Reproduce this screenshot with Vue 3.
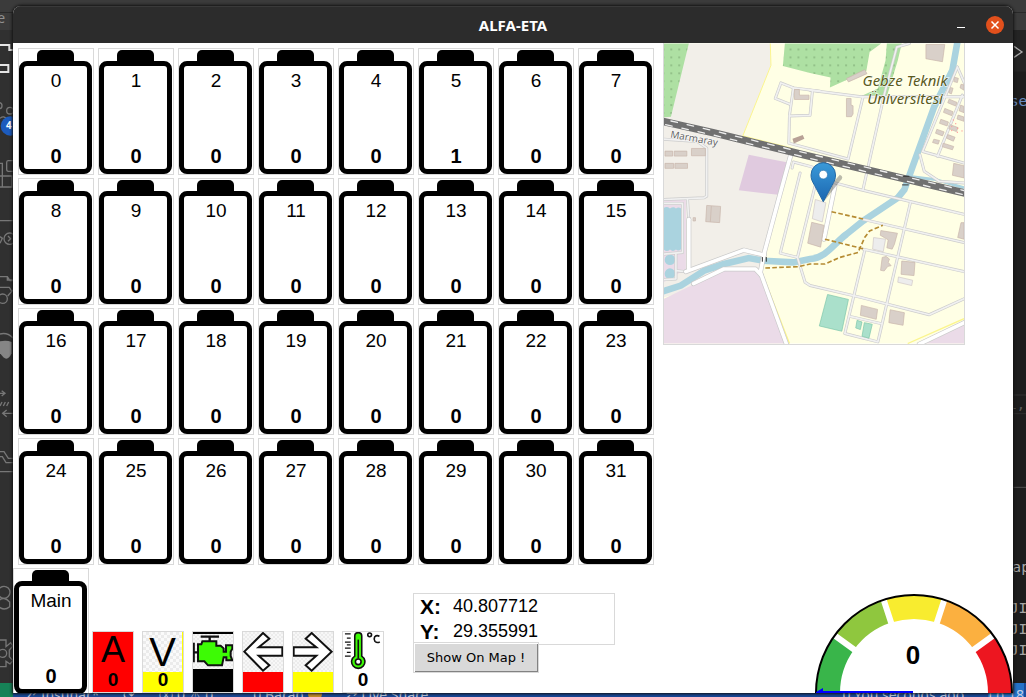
<script setup>
const cells = Array.from({ length: 32 }, (_, i) => ({ name: String(i), value: i === 5 ? 1 : 0 }))

const minorRoads = [
  '480,153 400,143 362,128 345,175 388,192',
  '450,150 605,170 915,170',
  '400,143 388,225 386,310 480,335 565,358 610,170',
  '388,228 450,226 457,155',
  '610,450 675,160 712,20 750,9',
  '525,430 600,450 915,525',
  '396,385 400,367 450,380 480,390',
  '420,400 360,642 412,655 435,730 450,740 600,775 810,828 915,780',
  '465,440 412,655',
  '610,540 915,610',
  '610,630 915,698',
  '753,490 655,910 555,885 615,635',
  '570,833 665,855',
  '895,80 790,335 915,370',
  '895,80 917,130',
  '910,165 835,350',
  '782,345 795,395 840,425 915,430',
  '9,298 110,305 138,325 138,470 130,475 9,480',
  '80,480 84,545',
  '9,492 65,492 65,640 9,645',
  '45,645 45,720 9,722',
  '45,695 75,698'
]
const mainRoads = [
  '84,540 84,690',
  '75,698 250,633 312,648',
  '98,734 190,690 285,690 302,708',
  '392,345 355,480 312,640 300,700 380,920',
  '525,440 492,600',
  '780,917 920,850'
]
const buildings = [
  '403,148 418,148 418,165 447,165 447,178 403,178',
  '12,334 35,334 35,349 12,349',
  '40,334 78,334 78,349 40,349',
  '92,326 134,326 134,348 92,348',
  '12,371 38,371 38,386 12,386',
  '42,371 80,371 80,386 42,386',
  '138,498 180,501 177,550 135,547',
  '800,12 857,12 850,64 800,55',
  '560,115 615,88 622,100 566,125',
  '560,175 574,175 574,195 580,197 580,222 575,230 560,230',
  '886,111 898,114 895,127 884,124',
  '906,132 915,134 915,150 903,143',
  '874,142 882,144 877,161 869,158',
  '870,177 894,187 890,198 866,188',
  '857,205 882,215 878,227 853,217',
  '845,238 868,246 864,258 841,250',
  '833,268 855,276 850,288 829,280',
  '873,254 897,263 892,275 869,266',
  '866,284 888,292 883,304 862,295',
  '852,310 884,320 880,330 850,321',
  '824,298 841,302 837,313 820,308',
  '905,195 915,199 915,218 900,212',
  '897,225 915,231 915,244 894,237',
  '884,371 915,378 915,415 880,407',
  '455,549 492,558 482,624 443,612',
  '664,574 714,582 705,615 698,630 682,626 686,602 662,588',
  '680,652 690,660 686,670 695,680 685,682 674,696 663,694 668,655',
  '727,666 767,670 764,710 725,706',
  '605,800 654,812 650,842 602,830',
  '692,813 735,822 731,860 688,852',
  '906,550 915,550 915,600 896,595'
]
const paleBuildings = [
  '466,480 498,490 487,548 457,538',
  '642,595 678,600 671,638 639,630',
  '717,714 760,724 757,740 715,730'
]
const courts = [
  '503,767 566,782 546,878 478,862',
  '592,845 607,850 602,873 588,868',
  '614,852 638,857 628,899 607,893'
]
const field = '9,9 330,9 332,75 247,288 395,330 300,700 9,775'
const forest = 'M9 9H84L30 230L9 232Z M374 9H665L630 35L620 92L510 142L512 112L450 98L368 77Z M682 9H727L715 60L682 168L600 170L655 145L678 60Z'
const river = 'M5 758L60 740L130 695L190 675L265 657L310 665L400 670L450 660C500 655 520 615 560 585L610 545L715 475L735 450L760 380L825 200L880 90L895 5'
</script>

<template>
  <div class="desktop">
    <svg class="strip left" width="13" height="697" viewBox="0 0 39 2091" aria-hidden="true">
      <rect width="39" height="2091" fill="#303030" />
      <rect width="39" height="90" fill="#3b3b3b" />
      <rect y="36" width="39" height="3" fill="#292929" />
      <text x="-8" y="68" font-size="42" fill="#909090">e</text>
      <g fill="none" stroke="#777" stroke-width="4">
        <path d="M0 135H28V150H39 M0 195H25V216H0" stroke="#e5e5e5" stroke-width="6" />
        <circle cx="-3" cy="317" r="9" /><circle cx="30" cy="332" r="10" /><path d="M0 355Q12 345 20 358" />
        <path d="M0 490H7V560 M0 528H36V561H0 M39 482H24Q20 482 20 488V508Q20 514 25 514H39" />
        <path d="M0 662H39 M0 710L7 715L0 730" /><circle cx="29" cy="716" r="17" /><path d="M24 708L32 716L24 724" />
        <path d="M0 830H22L30 842H39 M22 830V840H39 M0 862H28L34 872H39 M39 870L23 888" /><circle cx="8" cy="896" r="14" />
        <path d="M0 1002Q22 996 39 1014" /><path d="M0 1180H15M5 1172L15 1180L5 1188 M8 1240H39M20 1230L8 1240L20 1250 M0 1218L6 1206M10 1218L16 1206M20 1218L26 1206" />
        <path d="M0 1355H12L25 1375H39 M0 1370H7L18 1388H39 M0 1415H39" />
        <circle cx="12" cy="1777" r="18" /><path d="M-4 1802Q12 1787 29 1806V1820Q12 1834 -4 1820" />
        <path d="M0 1920H18V1940L32 1928L39 1938L28 1950V1970L39 1982L30 1992L18 1984V2000H0" /><circle cx="8" cy="1960" r="12" />
      </g>
      <path d="M0 1024Q20 1020 35 1026V1060Q24 1084 10 1072L0 1060Z" fill="#858585" />
      <circle cx="31" cy="378" r="29" fill="#1c5bbd" />
      <text x="18" y="387" font-size="30" font-weight="700" fill="#fff">4</text>
    </svg>
    <svg class="strip right" width="13" height="697" viewBox="0 0 39 2091" aria-hidden="true">
      <rect width="39" height="2091" fill="#1d1d1d" />
      <rect width="39" height="90" fill="#3b3b3b" />
      <rect y="36" width="39" height="3" fill="#292929" />
      <rect y="90" width="39" height="125" fill="#242424" />
      <path d="M3 139L27 156L3 172" fill="none" stroke="#aaa" stroke-width="4" />
      <path d="M0 1185H39M0 1241H39" stroke="#2b2b2b" stroke-width="4" />
      <path d="M0 1462H39" stroke="#505050" stroke-width="3" />
      <g class="code" font-size="44" fill="#a6a6a6">
        <text x="-10" y="317" fill="#6789bf">se</text>
        <text x="-16" y="1226" fill="#5a5a5a">i,</text>
        <text x="-2" y="1715">ap</text>
        <text x="-10" y="1840">JI</text>
        <text x="-10" y="1902">JI</text>
        <text x="-10" y="1965">JI</text>
      </g>
    </svg>
    <footer class="status">
      <span class="remote"></span>
      <span>⎇ Insuhar*</span><span>⟳</span><span>ⓧ 0 ⚠ 0</span><span class="user">0 Baran <i></i></span><span>⇄ Live Share</span>
      <span class="ago">0 You seconds ago</span><span class="line">Ln 18</span>
    </footer>

    <main class="window">
      <header class="titlebar">
        <h1>ALFA-ETA</h1>
        <div class="controls">
          <button class="minimise" aria-label="Minimise"></button>
          <button class="close" aria-label="Close">
            <svg width="10" height="10" viewBox="0 0 10 10"><path d="M1.5 1.5L8.5 8.5M8.5 1.5L1.5 8.5" stroke="#fff" stroke-width="1.5" /></svg>
          </button>
        </div>
      </header>

      <div class="content">
        <section class="upper">
          <div class="cells">
            <div v-for="cell in cells" :key="cell.name" class="battery">
              <span class="cap"></span>
              <div class="case"><span>{{ cell.name }}</span><b>{{ cell.value }}</b></div>
            </div>
          </div>

          <svg class="map" viewBox="9 9 906 906" role="img" aria-label="Map">
            <defs>
              <pattern id="trees" width="24" height="24" patternUnits="userSpaceOnUse" x="-5" y="15">
                <rect width="24" height="24" fill="#aee0a3" /><circle cx="12" cy="12" r="2" fill="#638c5c" />
              </pattern>
              <linearGradient id="pin" x2="0" y2="1"><stop stop-color="#3a9ad9" /><stop offset="1" stop-color="#1b66b0" /></linearGradient>
            </defs>
            <rect x="9" y="9" width="906" height="906" fill="#ffffe5" />
            <polygon :points="field" fill="#f2efe9" />
            <path d="M330 9L332 75L247 288L395 325" fill="none" stroke="#fbf58e" stroke-width="3" />
            <path :d="forest" fill="url(#trees)" />
            <polygon points="265,345 380,368 354,466 235,452" fill="#e0cadf" />
            <polygon points="9,480 75,480 75,690 9,730" fill="#ebdbe8" />
            <polygon points="9,780 190,692 285,692 305,715 383,915 9,915" fill="#ebdbe8" />
            <polygon points="800,915 915,858 915,915" fill="#ebdbe8" />
            <path d="M308 710L388 915M745 915L915 840" stroke="#fbf58e" stroke-width="4" />
            <g fill="#aad3df">
              <path d="M9 505Q18 500 27 507Q38 500 45 507Q55 500 64 510V625Q55 640 45 631Q36 640 27 631Q18 640 9 632Z" />
              <circle cx="27" cy="662" r="16" /><circle cx="27" cy="704" r="16" />
            </g>
            <path :d="river" fill="none" stroke="#aad3df" stroke-width="20" />
            <path d="M745 410L830 420L915 445" fill="none" stroke="#aad3df" stroke-width="9" />
            <g fill="none" stroke-linejoin="round" stroke-linecap="round">
              <polyline v-for="p in minorRoads" :key="p" :points="p" stroke="#ccc" stroke-width="9" />
              <polyline v-for="p in minorRoads" :key="'i' + p" :points="p" stroke="#f1f1f1" stroke-width="5" />
              <polyline v-for="p in mainRoads" :key="p" :points="p" stroke="#c9c9c9" stroke-width="15" />
              <polyline v-for="p in mainRoads" :key="'i' + p" :points="p" stroke="#fff" stroke-width="11" />
              <path d="M9 245L160 279L450 350L915 460" stroke="#707070" stroke-width="23" />
              <path d="M14 254L160 286L450 356L915 466" stroke="#ededed" stroke-width="4" stroke-dasharray="20 30" />
              <path d="M30 243L160 273L450 343L915 453" stroke="#ededed" stroke-width="4" stroke-dasharray="20 30" />
            </g>
            <path d="M306 654V668M318 654V668M730 410H750M728 436H748" stroke="#333" stroke-width="3" />
            <g fill="none" stroke="#b58b32" stroke-width="5" stroke-dasharray="14 7">
              <path d="M515 517L615 540M495 600L615 630M315 687L415 683L450 675H495L540 655L595 640L615 595L630 575L670 558" />
            </g>
            <g fill="#d9d0c9" stroke="#c8b5aa" stroke-width="2">
              <polygon v-for="p in buildings" :key="p" :points="p" />
              <path d="M152 500L149 547M97 535H104V545H97Z" />
            </g>
            <polygon points="397,297 428,285 433,297 401,311" fill="#b8a196" />
            <g fill="#ededed" stroke="#cfc5c5" stroke-width="2"><polygon v-for="p in paleBuildings" :key="p" :points="p" /></g>
            <g fill="#aae0cb" stroke="#7bc5a9" stroke-width="2"><polygon v-for="p in courts" :key="p" :points="p" /></g>
            <g fill="#f99"><circle cx="883" cy="240" r="2" /><circle cx="890" cy="251" r="2" /><circle cx="878" cy="260" r="2" /><circle cx="896" cy="265" r="2" /><circle cx="895" cy="277" r="2" /><circle cx="878" cy="272" r="2" /><circle cx="909" cy="273" r="2" /></g>
            <text class="rail" transform="translate(27 293) rotate(10)">Marmaray</text>
            <g class="place"><text x="737" y="137">Gebze Teknik</text><text x="737" y="191">Üniversitesi</text></g>
            <path d="M493 485L540 425Q555 412 540 405L510 440Z" fill="#555" opacity=".4" />
            <path d="M490 487L464 438C456 424 453 418 453 406A37 37 0 0 1 527 406C527 418 524 424 516 438Z" fill="url(#pin)" stroke="#2469a5" stroke-width="3" />
            <circle cx="490" cy="405" r="13" fill="#fff" stroke="#2872ae" stroke-width="2" />
          </svg>
        </section>

        <section class="lower">
          <div class="battery">
            <span class="cap"></span>
            <div class="case"><span>Main</span><b>0</b></div>
          </div>

          <div class="indicators">
            <div class="lamp red"><span class="amp">A</span><b>0</b></div>
            <div class="lamp volt"><span class="vol">V</span><b>0</b></div>
            <div class="lamp engine">
              <svg viewBox="9 66 120 120">
                <rect x="9" y="66" width="120" height="6" />
                <rect x="9" y="177" width="120" height="10" />
                <path d="M32 80H87M59 80V94M11 98V157M9 127H22" stroke="#111" stroke-width="7" fill="none" />
                <path d="M37 94H79V107H92L101 115V125H108V106H127V116L122 125V138L127 151H109V142H101L96 166H54L43 154H24V103H34Z" fill="#3dfb05" stroke="#111" stroke-width="6" />
              </svg>
            </div>
            <div class="lamp stop">
              <svg viewBox="159 66 120 120"><path d="M163 125L219 69L238 86L206 112H277V137H206L238 166L219 182Z" fill="#fff" stroke="#111" stroke-width="6" /></svg>
            </div>
            <div class="lamp go">
              <svg viewBox="309 66 120 120"><path d="M425 125L365 69L347 86L379 112H311V137H379L347 166L365 182Z" fill="#fff" stroke="#111" stroke-width="6" /></svg>
            </div>
            <div class="lamp temperature">
              <svg viewBox="459 66 120 120">
                <path d="M462 72H480M468 85H480M462 98H480M468 107H480M462 117H480M468 130H480M462 142H480" stroke="#111" stroke-width="4" />
                <path d="M493 142V79Q493 68 504 68Q515 68 515 79V142A21 21 0 1 1 493 142Z" fill="#3dfb05" stroke="#111" stroke-width="5" />
                <path d="M504 90V150" stroke="#111" stroke-width="5" />
                <circle cx="504" cy="160" r="9" fill="#fff" stroke="#111" stroke-width="5" />
                <circle cx="540" cy="75" r="6" fill="none" stroke="#111" stroke-width="5" />
                <path d="M571 80Q563 74 556 81Q552 88 557 96Q564 102 572 97" fill="none" stroke="#111" stroke-width="5" />
              </svg>
              <b>0</b>
            </div>
          </div>

          <div class="location">
            <dl>
              <dt>X:</dt><dd>40.807712</dd>
              <dt>Y:</dt><dd>29.355991</dd>
            </dl>
            <button class="show">Show On Map !</button>
          </div>

          <div class="gauge">
            <svg width="198" height="99" viewBox="0 0 198 99" aria-hidden="true">
              <g fill="none" stroke-width="24" transform="translate(99 99)">
                <path d="M-86 0A86 86 0 0 1 -69.6 -50.5" stroke="#39b54a" />
                <path d="M-69.6 -50.5A86 86 0 0 1 -26.6 -81.8" stroke="#8fc73e" />
                <path d="M-26.6 -81.8A86 86 0 0 1 26.6 -81.8" stroke="#f8ec2f" />
                <path d="M26.6 -81.8A86 86 0 0 1 69.6 -50.5" stroke="#fbb040" />
                <path d="M69.6 -50.5A86 86 0 0 1 86 0" stroke="#ed1620" />
                <path d="M0 0L-80 -58M0 0L-30.6 -94M0 0L30.6 -94M0 0L80 -58" stroke="#fff" stroke-width="6" />
                <circle r="98" stroke="#000" stroke-width="2" />
              </g>
              <path d="M1 98L8 94V97H98V99H1Z" fill="#00f" />
            </svg>
            <b>0</b>
          </div>
        </section>
      </div>
    </main>
  </div>
</template>

<style>
body { background: #1e1e1e; }
</style>

<style scoped>
* { box-sizing: border-box; }
.desktop {
  position: relative;
  display: flex;
  height: 100vh;
  padding: 6px 13px 4px;
  overflow: hidden;
  background: #3b3b3b;
  font-family: "Liberation Sans", Arial, sans-serif;
  color: #000;
}
.strip { position: absolute; top: 0; font-family: "Noto Sans", sans-serif; }
.left { left: 0; }
.right { right: 0; }
.code { font-family: "DejaVu Sans Mono", monospace; }
.status {
  position: absolute;
  inset: auto 0 0;
  display: flex;
  gap: 24px;
  height: 14px;
  padding-right: 2px;
  overflow: hidden;
  background: #194999;
  color: #c3d0e6;
  font: 14px/24px "Noto Sans", sans-serif;
  white-space: nowrap;
}
.remote { width: 13px; margin-right: -16px; background: #168257; }
.user { margin-left: 16px; }
.user i { display: inline-block; width: 14px; height: 12px; border-radius: 6px; background: #c48d2c; }
.ago { margin-left: auto; }
.line { background: #2472c8; }
.window {
  position: relative;
  display: flex;
  flex: 1;
  flex-direction: column;
  min-width: 0;
  overflow: hidden;
  border-radius: 8px 8px 0 0;
  background: #fff;
  box-shadow: 0 0 3px 1px #111;
}
.titlebar {
  display: grid;
  grid-template-columns: 1fr auto 1fr;
  align-items: center;
  height: 37px;
  flex: none;
  background: #2c2c2c;
  border-top: 1px solid #393939;
}
h1 { grid-column: 2; margin: 0; color: #fff; font: 700 15px/20px "Noto Sans", sans-serif; }
.controls { display: flex; justify-content: flex-end; align-items: center; gap: 20px; padding-right: 9px; }
.controls button { padding: 0; border: 0; }
.minimise { width: 9px; height: 10px; background: linear-gradient(#fff, #fff) 0 7px / 8px 1px no-repeat; }
.close { display: grid; place-items: center; width: 18px; height: 18px; border-radius: 50%; background: #e2501c; }
.content { display: flex; flex: 1; flex-direction: column; justify-content: space-between; min-height: 0; }
.upper { display: flex; align-items: flex-start; gap: 9px; }
.cells { display: grid; grid-template-columns: repeat(8, 76px); gap: 3px 4px; padding: 5px 0 0 5px; }
.battery {
  display: flex;
  flex-direction: column;
  align-items: center;
  width: 76px;
  height: 127px;
  padding: 1px 1px 0 0;
  border: 1px solid #d9d9d9;
  background: #fff;
}
.cap { width: 37px; height: 11px; border-radius: 5px 5px 0 0; background: #000; }
.case {
  display: flex;
  flex-direction: column;
  justify-content: space-between;
  align-items: center;
  width: 73px;
  height: 113px;
  padding: 4px 0 0 1px;
  border: 5px solid #000;
  border-radius: 8px;
  font-size: 19px;
  line-height: 22px;
}
.case b { font-size: 20px; line-height: 26px; }
.map { display: block; width: 302px; height: 302px; border: solid #d9d9d9; border-width: 0 1px 1px; }
.rail { font: 30px "Noto Sans", sans-serif; fill: #666; stroke: #fff; stroke-width: 3px; paint-order: stroke; }
.place { font: italic 45px "Noto Sans", sans-serif; fill: #5b5b1c; stroke: #fff; stroke-width: 4px; stroke-opacity: .7; paint-order: stroke; text-anchor: middle; }
.lower { display: flex; align-items: flex-end; height: 125px; }
.lower > .battery { align-self: flex-start; flex: none; }
.indicators { display: flex; gap: 8px; margin-left: 3px; }
.lamp { display: flex; flex-direction: column; align-items: center; width: 42px; height: 62px; border: 1px solid #d9d9d9; }
.lamp svg { display: block; flex: none; width: 40px; height: 40px; background: repeating-conic-gradient(#ececec 0 25%, #f7f7f7 0 50%) 0 0 / 4px 4px; }
.lamp.temperature svg { height: 38px; background: #fff; }
.lamp > span { width: 40px; height: 38px; text-align: center; }
.lamp b { font-size: 19px; line-height: 20px; }
.red { background: #f00; }
.amp { font-size: 36px; line-height: 36px; }
.volt { background: #ff0; }
.volt .vol { align-self: flex-start; width: 39px; height: 40px; font-size: 40px; line-height: 40px; background: repeating-conic-gradient(#ebebeb 0 25%, #fafafa 0 50%) 0 0 / 6px 6px; }
.volt b { line-height: 16px; }
.engine { background: #000; }
.stop { background: #f00; }
.go { background: #ff0; }
.location { display: flex; flex-direction: column; align-items: flex-start; width: 202px; margin: 0 0 20px 29px; }
dl {
  display: grid;
  grid-template-columns: 33px 1fr;
  width: 100%;
  height: 52px;
  margin: 0 0 -3px;
  padding: 0 6px;
  border: 1px solid #d9d9d9;
  line-height: 25px;
}
dt { font-size: 21px; font-weight: 700; }
dd { margin: 0; font-size: 18px; }
.show {
  width: 126px;
  height: 31px;
  padding: 0;
  border: 1px solid #d9d9d9;
  background: #d9d9d9;
  box-shadow: inset 1px 1px #fff, inset -1px -1px #828282;
  color: #000;
  font: 13px "DejaVu Sans", sans-serif;
}
.gauge { position: relative; width: 198px; height: 99px; margin-left: auto; }
.gauge svg { display: block; }
.gauge b { position: absolute; inset: 46px 2px auto 0; text-align: center; font-size: 26px; line-height: 30px; }
</style>
